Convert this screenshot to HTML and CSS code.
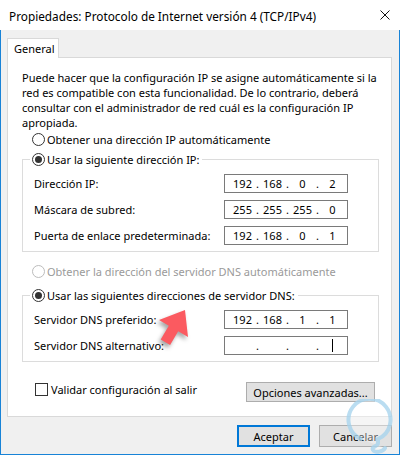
FILE: index.html
```html
<!DOCTYPE html>
<html lang="es">
<head>
<meta charset="utf-8">
<title>Propiedades: Protocolo de Internet versión 4 (TCP/IPv4)</title>
<link rel="stylesheet" href="styles.css">
</head>
<body>
<div class="window">
  <div class="titlebar">
    <span class="title">Propiedades: Protocolo de Internet versión 4 (TCP/IPv4)</span>
    <svg class="close" width="10" height="10" viewBox="0 0 10 10"><path d="M0.5 0.5 L9.5 9.5 M9.5 0.5 L0.5 9.5" stroke="#111" stroke-width="1" fill="none"/></svg>
  </div>
  <div class="client">
    <div class="tabs"><div class="tab">General</div></div>
    <div class="panel">
      <p class="intro">Puede hacer que la configuración IP se asigne automáticamente si la<br>red es compatible con esta funcionalidad. De lo contrario, deberá<br>consultar con el administrador de red cuál es la configuración IP<br>apropiada.</p>
      <div class="radio-row"><span class="radio"></span>Obtener una dirección IP automáticamente</div>
      <fieldset class="group group-ip">
        <legend><span class="legend-inner"><span class="radio checked"></span>Usar la siguiente dirección IP:</span></legend>
        <div class="field"><span class="field-label">Dirección IP:</span>
          <div class="ip"><span class="seg">192</span><span class="dot">.</span><span class="seg">168</span><span class="dot">.</span><span class="seg">0</span><span class="dot">.</span><span class="seg">2</span></div></div>
        <div class="field"><span class="field-label">Máscara de subred:</span>
          <div class="ip"><span class="seg">255</span><span class="dot">.</span><span class="seg">255</span><span class="dot">.</span><span class="seg">255</span><span class="dot">.</span><span class="seg">0</span></div></div>
        <div class="field"><span class="field-label">Puerta de enlace predeterminada:</span>
          <div class="ip"><span class="seg">192</span><span class="dot">.</span><span class="seg">168</span><span class="dot">.</span><span class="seg">0</span><span class="dot">.</span><span class="seg">1</span></div></div>
      </fieldset>
      <div class="radio-row disabled spaced"><span class="radio"></span>Obtener la dirección del servidor DNS automáticamente</div>
      <fieldset class="group group-dns">
        <legend><span class="legend-inner"><span class="radio checked"></span>Usar las siguientes direcciones de servidor DNS:</span></legend>
        <div class="field"><span class="field-label">Servidor DNS preferido:</span>
          <div class="ip"><span class="seg">192</span><span class="dot">.</span><span class="seg">168</span><span class="dot">.</span><span class="seg">1</span><span class="dot">.</span><span class="seg">1</span></div></div>
        <div class="field"><span class="field-label">Servidor DNS alternativo:</span>
          <div class="ip"><span class="seg"></span><span class="dot">.</span><span class="seg"></span><span class="dot">.</span><span class="seg"></span><span class="dot">.</span><span class="seg"><span class="caret"></span></span></div></div>
      </fieldset>
      <div class="options-row">
        <div class="check-row"><span class="checkbox"></span>Validar configuración al salir</div>
        <button class="btn btn-adv">Opciones avanzadas...</button>
      </div>
    </div>
    <div class="buttons">
      <button class="btn primary">Aceptar</button>
      <button class="btn">Cancelar</button>
    </div>
  </div>
  <svg class="arrow" width="50" height="55" viewBox="0 0 50 55"><polygon points="35,10 38,37 28.2,31.3 20.1,45.1 10.7,39.5 18.8,25.7 9,20" fill="#fb5a60"/></svg>
  <svg class="logo" width="56" height="56" viewBox="0 0 56 56"><path d="M18 40 A21 21 0 1 1 35 40 L35 44 C35 48 28 47 30 51 C32 54 40 53 42 49" fill="rgba(255,255,255,0.45)" stroke="#a9d5ee" stroke-width="4" stroke-linecap="round" opacity="0.8"/></svg>
</div>
</body>
</html>
```
FILE: styles.css
```css
html, body {
  margin: 0;
  padding: 0;
  background: #ffffff;
}
body {
  font-family: "Noto Sans", "DejaVu Sans", sans-serif;
  font-size: 11px;
  color: #000;
}
.window {
  width: 400px;
  height: 455px;
  display: flex;
  flex-direction: column;
  position: relative;
  overflow: hidden;
  background: #fff;
}
.titlebar {
  height: 30px;
  flex: none;
  display: flex;
  align-items: center;
  padding: 1px 10px 0 9px;
  box-sizing: border-box;
  font-size: 11.8px;
}
.close {
  margin-left: auto;
  margin-bottom: 1px;
}
.client {
  flex: 1;
  border: 1px solid #1883d7;
  border-top: 0;
  background: #f0f0f0;
  display: flex;
  flex-direction: column;
}
.tabs {
  padding: 8px 0 0 6px;
  display: flex;
}
.tab {
  width: 52px;
  height: 20px;
  box-sizing: border-box;
  border: 1px solid #d9d9d9;
  border-bottom: 0;
  background: #fff;
  padding-left: 6px;
  line-height: 19px;
  margin-bottom: -1px;
  position: relative;
  z-index: 1;
}
.panel {
  margin-left: 6px;
  width: 385px;
  height: 360px;
  box-sizing: border-box;
  border: 1px solid #d9d9d9;
  background: #fff;
  padding: 12px 0 0 14px;
}
.intro {
  margin: 0;
  line-height: 15px;
}
.radio-row {
  display: flex;
  align-items: center;
  height: 16px;
  margin-top: 1px;
  padding-left: 10px;
}
.radio-row.spaced {
  margin-top: 11px;
}
.radio-row.disabled {
  color: #9a9a9a;
}
.radio {
  width: 13px;
  height: 13px;
  box-sizing: border-box;
  border: 1px solid #333;
  border-radius: 50%;
  margin-right: 2px;
  background: #fff;
  display: flex;
  align-items: center;
  justify-content: center;
  flex: none;
}
.disabled .radio {
  border-color: #bcbcbc;
}
.radio.checked::after {
  content: "";
  width: 7px;
  height: 7px;
  border-radius: 50%;
  background: #333;
}
.group {
  width: 357px;
  min-width: 0;
  box-sizing: border-box;
  border: 1px solid #dcdcdc;
  margin: 4px 0 0 0;
  padding: 0 0 6px 7px;
}
.group-dns {
  margin-top: 8px;
}
.group legend {
  padding: 0 3px 0 2px;
}
.legend-inner {
  display: flex;
  align-items: center;
  height: 16px;
}
.field {
  display: flex;
  align-items: center;
  height: 19px;
  margin-top: 7px;
  padding-left: 4px;
}
.field-label {
  width: 190px;
  flex: none;
}
.ip {
  width: 124px;
  height: 19px;
  box-sizing: border-box;
  border: 1px solid #7a7a7a;
  display: flex;
  align-items: center;
  padding-left: 6px;
}
.seg {
  width: 23px;
  text-align: center;
  display: flex;
  justify-content: center;
}
.dot {
  width: 7px;
  text-align: center;
}
.caret {
  display: block;
  width: 1px;
  height: 13px;
  background: #000;
}
.options-row {
  display: flex;
  align-items: flex-start;
  width: 353px;
  box-sizing: border-box;
  margin-top: 20px;
  padding-left: 13px;
}
.check-row {
  display: flex;
  align-items: center;
  height: 13px;
  margin-top: 1px;
}
.checkbox {
  width: 13px;
  height: 13px;
  box-sizing: border-box;
  border: 1px solid #333;
  background: #fff;
  margin-right: 3px;
}
.btn {
  font-family: inherit;
  font-size: 11px;
  color: #000;
  background: #e1e1e1;
  border: 1px solid #adadad;
  padding: 0;
  margin: 0;
  width: 73px;
  height: 22px;
  box-sizing: border-box;
}
.btn-adv {
  width: 129px;
  height: 20px;
  margin-left: auto;
}
.btn.primary {
  border: 2px solid #0078d7;
}
.buttons {
  display: flex;
  justify-content: flex-end;
  gap: 9px;
  margin-top: 8px;
  padding-right: 7px;
}
.arrow {
  position: absolute;
  left: 150px;
  top: 300px;
  filter: drop-shadow(-2px 3px 2px rgba(0, 0, 0, 0.35));
}
.logo {
  position: absolute;
  left: 343px;
  top: 399px;
}
```
